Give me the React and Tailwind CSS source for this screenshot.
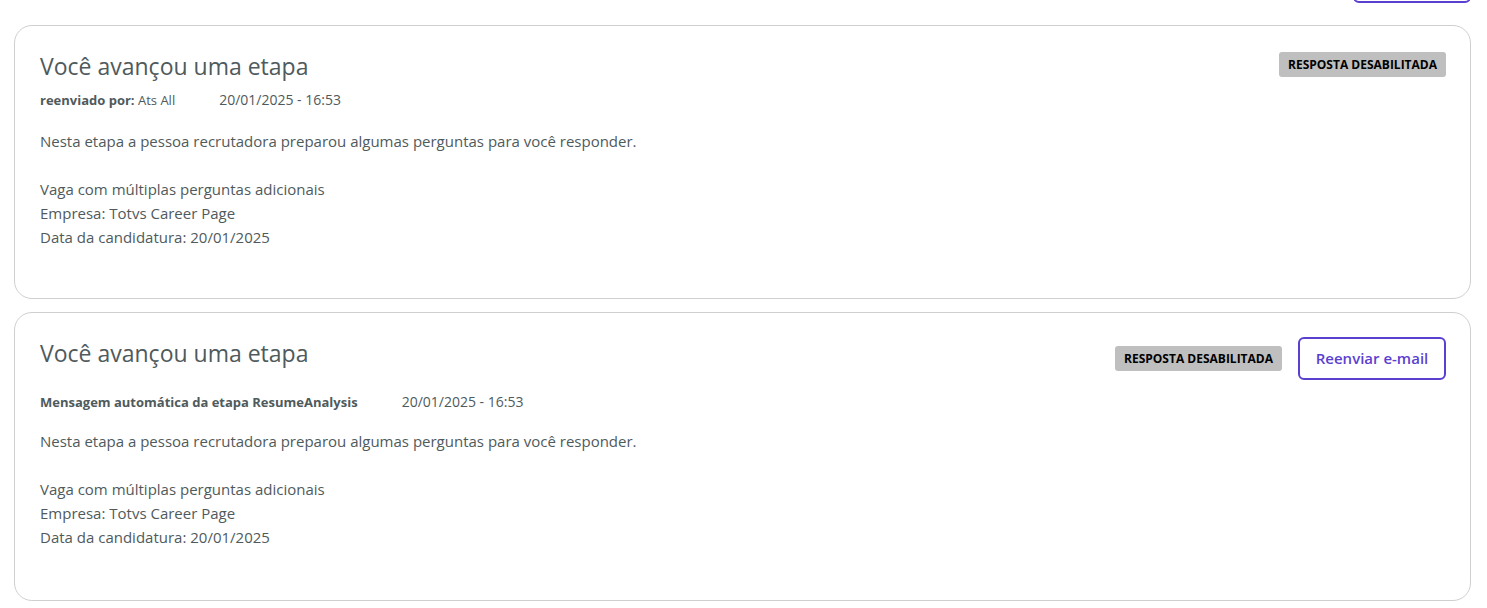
import React from 'react';

const cards = [
    {
        meta: { label: 'reenviado por:', value: 'Ats All' },
        date: '20/01/2025 - 16:53',
        showResend: false,
    },
    {
        meta: { label: 'Mensagem automática da etapa ResumeAnalysis', value: null },
        date: '20/01/2025 - 16:53',
        showResend: true,
    },
];

function MessageCard({ meta, date, showResend }) {
    return (
        <div className={`border border-[#cfcfcf] rounded-[18px] bg-white pl-[25px] pr-[24px] pt-[24px] ${showResend ? 'pb-[51px]' : 'pb-[49px]'}`}>
            {/* Header */}
            <div className="flex items-start justify-between">
                <h2 className="text-[23px] leading-[32px] text-[#4f5a5c] font-normal">Você avançou uma etapa</h2>
                <div className={`flex items-center gap-4 ${showResend ? '' : 'mt-[2px]'}`}>
                    <span className="bg-[#bfbfbf] text-black text-[12px] font-bold uppercase rounded-[3px] h-[25px] px-[9px] flex items-center">
                        Resposta desabilitada
                    </span>
                    {showResend && (
                        <button className="h-[43px] w-[148px] rounded-[6px] border-2 border-[#5b3fd0] text-[#5b3fd0] text-[15px] font-semibold bg-white">
                            Reenviar e-mail
                        </button>
                    )}
                </div>
            </div>

            {/* Meta */}
            <div className={`flex items-center gap-11 leading-[20px] text-[#4f5a5c] ${showResend ? 'mt-3' : 'mt-2'}`}>
                <span className="text-[13px]">
                    <span className="font-bold">{meta.label}</span>
                    {meta.value && <span> {meta.value}</span>}
                </span>
                <span className="text-[14px]">{date}</span>
            </div>

            {/* Body */}
            <div className={`text-[15px] leading-[24px] text-[#4f5a5c] ${showResend ? 'mt-[17px]' : 'mt-[19px]'}`}>
                <p>Nesta etapa a pessoa recrutadora preparou algumas perguntas para você responder.</p>
                <p>&nbsp;</p>
                <p>Vaga com múltiplas perguntas adicionais</p>
                <p>Empresa: Totvs Career Page</p>
                <p>Data da candidatura: 20/01/2025</p>
            </div>
        </div>
    );
}

export default function App() {
    return (
        <div className="min-h-[608px] bg-white pl-[14px] pr-[16px] overflow-hidden" style={{ fontFamily: '"Open Sans", "Noto Sans", sans-serif' }}>
            <div className="flex justify-end mb-[22px]">
                <button className="h-[44px] w-[118px] -mt-[41px] rounded-[6px] border-2 border-[#5b3fd0] bg-white" />
            </div>
            <div className="flex flex-col gap-[13px]">
                {cards.map((c, i) => (
                    <MessageCard key={i} {...c} />
                ))}
            </div>
        </div>
    );
}
